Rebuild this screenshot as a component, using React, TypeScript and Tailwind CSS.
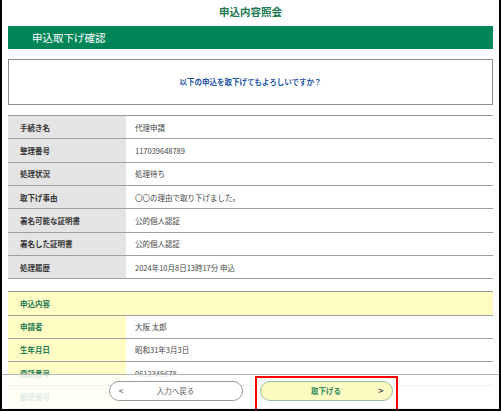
import React from "react";

type Row = {
  label: string;
  value: string;
};

const statusRows: Row[] = [
  { label: "手続き名", value: "代理申請" },
  { label: "整理番号", value: "117039648789" },
  { label: "処理状況", value: "処理待ち" },
  { label: "取下げ事由", value: "〇〇の理由で取り下げました。" },
  { label: "署名可能な証明書", value: "公的個人認証" },
  { label: "署名した証明書", value: "公的個人認証" },
  { label: "処理履歴", value: "2024年10月8日13時17分 申込" },
];

const applicationRows: Row[] = [
  { label: "申請者", value: "大阪 太郎" },
  { label: "生年月日", value: "昭和31年3月3日" },
  { label: "電話番号", value: "0612345678" },
  { label: "郵便番号", value: "" },
];

const font = { fontFamily: '"Noto Sans CJK JP", "Noto Sans", sans-serif' };

export default function App() {
  return (
    <div
      className="relative w-[501px] h-[411px] overflow-hidden bg-white border-l-2 border-r-2 border-b-2 border-black"
      style={font}
    >
      <div className="px-[6px]">
        <h1 className="pt-[4px] h-[26px] text-center text-[10.5px] leading-[16px] font-bold text-[#1d7a52]">
          申込内容照会
        </h1>

        <div className="h-[23px] bg-[#008558] flex items-center pl-[24px] text-[10.5px] text-white">
          申込取下げ確認
        </div>

        <div className="mt-[10px] h-[46px] border border-[#8c8c8c] flex items-center justify-center text-[7.5px] font-bold text-[#1f56a8]">
          以下の申込を取下げてもよろしいですか？
        </div>

        <div className="mt-[10px] border-t-[1.5px] border-[#9a9a9a]">
          {statusRows.map((row) => (
            <div
              key={row.label}
              className="flex h-[23.33px] border-b-[1.5px] border-[#a0a0a0] text-[7.5px]"
            >
              <div className="w-[118px] shrink-0 bg-[#e4e4e4] flex items-center pl-[12px] font-bold text-[#333]">
                {row.label}
              </div>
              <div className="flex-1 flex items-center pl-[9px] text-[#444]">
                {row.value}
              </div>
            </div>
          ))}
        </div>

        <div className="mt-[12px] border-t-[1.5px] border-[#9a9a9a]">
          <div className="h-[23.33px] bg-[#fffcc4] border-b-[1.5px] border-[#a0a0a0] flex items-center pl-[12px] text-[7.5px] font-bold text-[#1d7a52]">
            申込内容
          </div>
          {applicationRows.map((row) => (
            <div
              key={row.label}
              className="flex h-[23.33px] border-b-[1.5px] border-[#a0a0a0] text-[7.5px]"
            >
              <div className="w-[118px] shrink-0 bg-[#fffcc4] flex items-center pl-[12px] font-bold text-[#1d7a52]">
                {row.label}
              </div>
              <div className="flex-1 flex items-center pl-[9px] text-[#444]">
                {row.value}
              </div>
            </div>
          ))}
        </div>
      </div>

      {/* fixed footer, translucent over the list */}
      <div className="absolute left-0 right-0 bottom-0 h-[35px] bg-white/85 border-t border-[#b5b5b5] flex justify-center gap-[17px] pt-[6px]">
        <button className="relative w-[134px] h-[20px] rounded-full border border-[#9a9a9a] bg-white text-[7.5px] text-[#666] flex items-center justify-center">
          <span className="absolute left-[9px] text-[9px] text-[#555]">&lt;</span>
          入力へ戻る
        </button>
        <div className="relative">
          <button className="relative w-[133px] h-[20px] rounded-full border border-[#96bf9f] bg-[#fcfbc2] text-[7.5px] font-bold text-[#2f8a5a] flex items-center justify-center">
            取下げる
            <span className="absolute right-[8px] text-[9px] font-bold text-[#555]">&gt;</span>
          </button>
          <span className="absolute -left-[5px] -right-[5px] -top-[5px] -bottom-[5px] border-2 border-[#f00] pointer-events-none" />
        </div>
      </div>
    </div>
  );
}
